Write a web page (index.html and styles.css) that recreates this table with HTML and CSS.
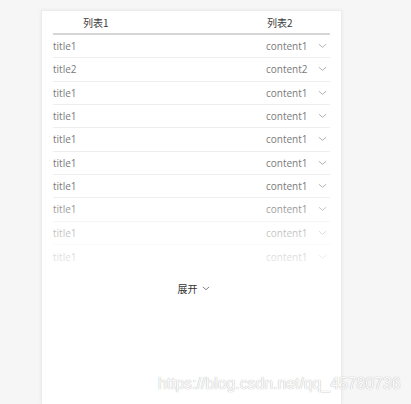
FILE: index.html
```html
<!DOCTYPE html>
<html>
<head>
<meta charset="utf-8">
<link rel="stylesheet" href="styles.css">
</head>
<body>
<div class="card">
  <div class="head">
    <span class="h1">列表1</span>
    <span class="h2">列表2</span>
  </div>
  <div class="list">
    <div class="row"><span class="t">title1</span><span class="c">content1</span><svg class="chev" viewBox="0 0 10 6"><path d="M1 1 L5 4.5 L9 1" fill="none" stroke="#aaa" stroke-width="1"/></svg></div>
    <div class="row"><span class="t">title2</span><span class="c">content2</span><svg class="chev" viewBox="0 0 10 6"><path d="M1 1 L5 4.5 L9 1" fill="none" stroke="#aaa" stroke-width="1"/></svg></div>
    <div class="row"><span class="t">title1</span><span class="c">content1</span><svg class="chev" viewBox="0 0 10 6"><path d="M1 1 L5 4.5 L9 1" fill="none" stroke="#aaa" stroke-width="1"/></svg></div>
    <div class="row"><span class="t">title1</span><span class="c">content1</span><svg class="chev" viewBox="0 0 10 6"><path d="M1 1 L5 4.5 L9 1" fill="none" stroke="#aaa" stroke-width="1"/></svg></div>
    <div class="row"><span class="t">title1</span><span class="c">content1</span><svg class="chev" viewBox="0 0 10 6"><path d="M1 1 L5 4.5 L9 1" fill="none" stroke="#aaa" stroke-width="1"/></svg></div>
    <div class="row"><span class="t">title1</span><span class="c">content1</span><svg class="chev" viewBox="0 0 10 6"><path d="M1 1 L5 4.5 L9 1" fill="none" stroke="#aaa" stroke-width="1"/></svg></div>
    <div class="row"><span class="t">title1</span><span class="c">content1</span><svg class="chev" viewBox="0 0 10 6"><path d="M1 1 L5 4.5 L9 1" fill="none" stroke="#aaa" stroke-width="1"/></svg></div>
    <div class="row"><span class="t">title1</span><span class="c">content1</span><svg class="chev" viewBox="0 0 10 6"><path d="M1 1 L5 4.5 L9 1" fill="none" stroke="#aaa" stroke-width="1"/></svg></div>
    <div class="row"><span class="t">title1</span><span class="c">content1</span><svg class="chev" viewBox="0 0 10 6"><path d="M1 1 L5 4.5 L9 1" fill="none" stroke="#aaa" stroke-width="1"/></svg></div>
    <div class="row last"><span class="t">title1</span><span class="c">content1</span><svg class="chev" viewBox="0 0 10 6"><path d="M1 1 L5 4.5 L9 1" fill="none" stroke="#aaa" stroke-width="1"/></svg></div>
    <div class="fade"></div>
  </div>
  <div class="more">展开 <svg class="mchev" viewBox="0 0 10 6"><path d="M1 1 L5 4.5 L9 1" fill="none" stroke="#666" stroke-width="1"/></svg></div>
</div>
<div class="wm">https://blog.csdn.net/qq_45780736</div>
</body>
</html>
```
FILE: styles.css
```css
html, body {
  margin: 0;
  padding: 0;
  background: #f6f6f6;
  height: 404px;
  overflow: hidden;
  font-family: "Open Sans", "Noto Sans CJK SC", sans-serif;
}
.card {
  margin: 10px 0 0 41px;
  width: 301px;
  height: 394px;
  background: #fff;
  box-sizing: border-box;
  border: 1px solid #ececec;
  border-bottom: none;
  box-shadow: 0 0 4px rgba(0,0,0,0.06);
  padding: 0 11px 0 11px;
}
.head {
  height: 22px;
  border-bottom: 2px solid #d6d6d6;
  display: flex;
  align-items: center;
  font-size: 10px;
  color: #3a3a3a;
  font-family: "Noto Sans CJK SC", sans-serif;
}
.h1 { margin-left: 30px; width: 184px; }
.list { position: relative; }
.row {
  height: 23.33px;
  box-sizing: border-box;
  border-bottom: 1px solid #eeeeee;
  display: flex;
  align-items: center;
  font-size: 10px;
  color: #7a7a7a;
}
.row.last { border-bottom: none; }
.t { width: 213px; }
.c { width: 52px; }
.chev { width: 9px; height: 6px; }
.fade {
  position: absolute;
  left: 0; right: 0;
  top: 160px;
  height: 74px;
  background: linear-gradient(to bottom, rgba(255,255,255,0) 0%, rgba(255,255,255,0.45) 35%, rgba(255,255,255,0.85) 100%);
}
.more {
  margin-top: 13px;
  display: flex;
  justify-content: center;
  align-items: center;
  font-size: 10px;
  color: #333;
  font-family: "Noto Sans CJK SC", sans-serif;
  padding-left: 4px;
}
.mchev { width: 8px; height: 5px; margin-left: 4px; }
.wm {
  position: absolute;
  left: 158px;
  top: 375px;
  font-family: "Liberation Sans", Arial, sans-serif;
  font-size: 15.8px;
  color: #fbfbfb;
  text-shadow: 0 0 1px #bbb, 0 0 1px #ccc;
}
```
